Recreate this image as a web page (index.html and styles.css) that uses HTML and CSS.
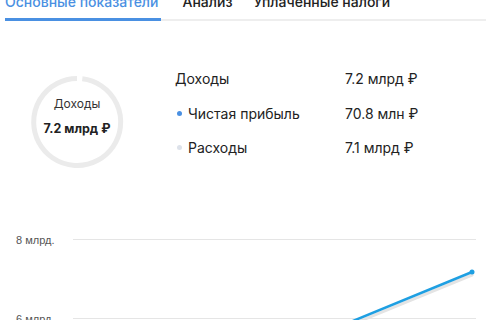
FILE: index.html
```html
<!DOCTYPE html>
<html lang="ru">
<head>
<meta charset="utf-8">
<link rel="stylesheet" href="styles.css">
</head>
<body>
<div class="tabs">
  <div class="tab active">Основные показатели</div>
  <div class="tab">Анализ</div>
  <div class="tab">Уплаченные налоги</div>
</div>
<div class="summary">
  <div class="ring">
    <svg width="96" height="96" viewBox="0 0 96 96">
      <path d="M53.3 4.8 A43.5 43.5 0 1 1 48 4.5" fill="none" stroke="#ebebeb" stroke-width="5"/>
    </svg>
    <div class="ring-text">
      <div class="ring-label">Доходы</div>
      <div class="ring-value">7.2 млрд ₽</div>
    </div>
  </div>
  <div class="legend">
    <div class="name">Доходы</div><div class="val">7.2 млрд ₽</div>
    <div class="name"><span class="dot blue"></span>Чистая прибыль</div><div class="val">70.8 млн ₽</div>
    <div class="name"><span class="dot grey"></span>Расходы</div><div class="val">7.1 млрд ₽</div>
  </div>
</div>
<div class="chart">
  <svg width="491" height="100" viewBox="0 0 491 100">
    <line x1="73" y1="14.5" x2="476" y2="14.5" stroke="#e5e5e5" stroke-width="1"/>
    <line x1="73" y1="93.5" x2="476" y2="93.5" stroke="#e5e5e5" stroke-width="1"/>
    <text x="16" y="19" class="axis">8 млрд.</text>
    <text x="16" y="98" class="axis">6 млрд.</text>
    <line x1="348" y1="101" x2="472" y2="50" stroke="#e4e4e4" stroke-width="3" stroke-linecap="round"/>
    <line x1="348" y1="98" x2="472" y2="47" stroke="#1e9fe2" stroke-width="2.5" stroke-linecap="round"/>
    <circle cx="472" cy="47" r="2.5" fill="#1e9fe2"/>
  </svg>
</div>
</body>
</html>
```
FILE: styles.css
```css
html, body {
  margin: 0;
  padding: 0;
  background: #fff;
  width: 491px;
  height: 320px;
  overflow: hidden;
  font-family: Inter, "Noto Sans", sans-serif;
  color: #222;
}
.tabs {
  display: flex;
  gap: 21px;
  margin: -7px 5px 0 5px;
  border-bottom: 2px solid #eeeeee;
}
.tab {
  font-size: 14px;
  font-weight: 500;
  line-height: 18px;
  height: 18px;
  padding-bottom: 8px;
  color: #222;
}
.tab.active {
  color: #4a90e2;
  border-bottom: 3px solid #4a90e2;
  margin-bottom: -2px;
  padding-bottom: 7px;
  padding-right: 3px;
}
.summary {
  display: flex;
}
.ring {
  position: relative;
  width: 96px;
  height: 96px;
  margin: 53px 0 0 29px;
}
.ring svg { display: block; }
.ring-text {
  position: absolute;
  inset: 0;
  display: flex;
  flex-direction: column;
  align-items: center;
  justify-content: center;
  gap: 9px;
  padding-bottom: 11px;
}
.ring-label {
  font-size: 12px;
  line-height: 16px;
  color: #333;
}
.ring-value {
  font-size: 12.5px;
  line-height: 16px;
  font-weight: 700;
  color: #222;
}
.legend {
  display: grid;
  grid-template-columns: 170px auto;
  grid-auto-rows: 17.5px;
  row-gap: 17px;
  margin: 49px 0 0 50px;
  font-size: 14px;
  line-height: 17.5px;
}
.name, .val { display: flex; align-items: center; height: 17.5px; }
.dot {
  width: 5px;
  height: 5px;
  border-radius: 50%;
  margin: 0 6px 0 2px;
}
.dot.blue { background: #4a90e2; }
.dot.grey { background: #dde2ea; }
.chart {
  margin-top: 55px;
}
.chart svg { display: block; }
.axis {
  font-family: "Liberation Sans", Arial, sans-serif;
  font-size: 11px;
  fill: #555;
}
```
